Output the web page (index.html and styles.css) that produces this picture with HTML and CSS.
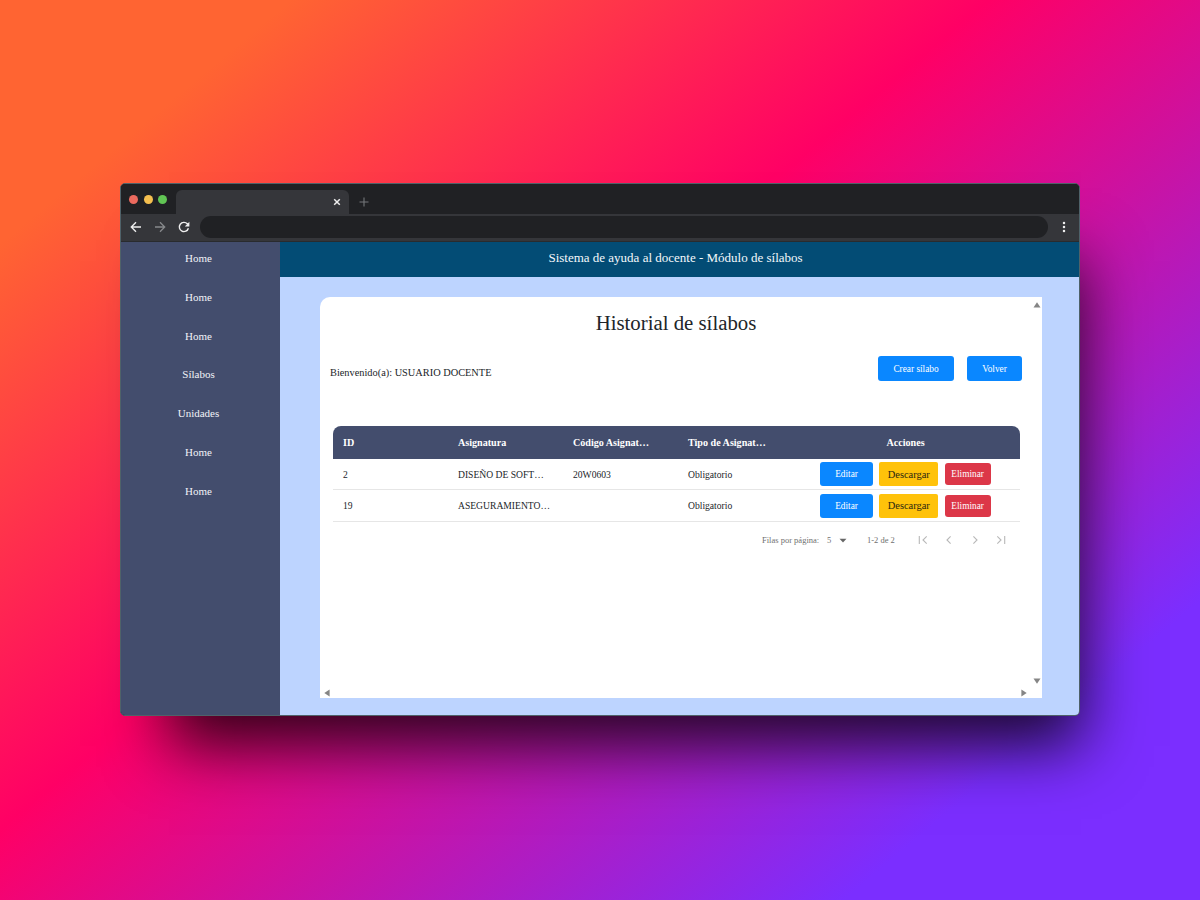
FILE: index.html
```html
<!DOCTYPE html>
<html lang="es">
<head>
<meta charset="utf-8">
<title>Historial de sílabos</title>
<link rel="stylesheet" href="styles.css">
</head>
<body>
<div class="window">
  <div class="tabs">
    <div class="lights"><i class="red"></i><i class="yellow"></i><i class="green"></i></div>
    <div class="tab"><svg width="8" height="8" viewBox="0 0 8 8"><path d="M1.2 1.2l5.6 5.6M6.8 1.2L1.2 6.8" stroke="#eee" stroke-width="1.5"/></svg></div>
    <svg class="plus" width="10" height="10" viewBox="0 0 10 10"><path d="M5 .5v9M.5 5h9" stroke="#74777a" stroke-width="1.1"/></svg>
  </div>
  <div class="toolbar">
    <svg class="nav" width="12" height="12" viewBox="0 0 12 12"><path d="M11 6H1.5M6 1.3L1.3 6 6 10.7" fill="none" stroke="#eee" stroke-width="1.4"/></svg>
    <svg class="nav" width="12" height="12" viewBox="0 0 12 12"><path d="M1 6h9.5M6 1.3L10.7 6 6 10.7" fill="none" stroke="#87898c" stroke-width="1.3"/></svg>
    <svg class="nav" width="12" height="12" viewBox="0 0 12 12"><path d="M10.4 7.2A4.6 4.6 0 1 1 9.3 2.8L10.4 4" fill="none" stroke="#eee" stroke-width="1.4"/><path d="M11.4.8v4.6H6.8z" fill="#eee"/></svg>
    <div class="address"></div>
    <svg class="dots" width="4" height="12" viewBox="0 0 4 12" fill="#eee"><circle cx="2" cy="2" r="1.25"/><circle cx="2" cy="6" r="1.25"/><circle cx="2" cy="10" r="1.25"/></svg>
  </div>
  <div class="app">
    <nav class="side"><a>Home</a><a>Home</a><a>Home</a><a>Sílabos</a><a>Unidades</a><a>Home</a><a>Home</a></nav>
    <main class="main">
      <header class="banner">Sistema de ayuda al docente - Módulo de sílabos</header>
      <section class="panel">
        <h1>Historial de sílabos</h1>
        <div class="welcome"><span>Bienvenido(a): USUARIO DOCENTE</span><div class="actions"><button class="btn create">Crear sílabo</button><button class="btn back">Volver</button></div></div>
        <div class="table">
          <div class="row head"><b>ID</b><b>Asignatura</b><b>Código Asignat…</b><b>Tipo de Asignat…</b><b class="center">Acciones</b></div>
          <div class="row"><span>2</span><span>DISEÑO DE SOFT…</span><span>20W0603</span><span>Obligatorio</span><div class="ops"><button class="btn edit">Editar</button><button class="btn download">Descargar</button><button class="btn delete">Eliminar</button></div></div>
          <div class="row last"><span>19</span><span>ASEGURAMIENTO…</span><span></span><span>Obligatorio</span><div class="ops"><button class="btn edit">Editar</button><button class="btn download">Descargar</button><button class="btn delete">Eliminar</button></div></div>
        </div>
        <div class="pager">
          <span class="label">Filas por página:</span><span class="size">5</span>
          <svg class="caret" width="8" height="5" viewBox="0 0 8 5"><path d="M.5.7h7L4 4.4z" fill="#666"/></svg>
          <span class="range">1-2 de 2</span>
          <svg class="step" width="10" height="10" viewBox="0 0 10 10"><path d="M1.3 1v8M8.7 1.4L5 5l3.7 3.6"/></svg>
          <svg class="step" width="10" height="10" viewBox="0 0 10 10"><path d="M6.6 1.4L3 5l3.6 3.6"/></svg>
          <svg class="step" width="10" height="10" viewBox="0 0 10 10"><path d="M3.4 1.4L7 5 3.4 8.6"/></svg>
          <svg class="step" width="10" height="10" viewBox="0 0 10 10"><path d="M8.7 1v8M1.3 1.4L5 5 1.3 8.6"/></svg>
        </div>
        <svg class="arrow up" width="8" height="6" viewBox="0 0 8 6"><path d="M4 .3L7.5 5.6H.5z"/></svg>
        <svg class="arrow down" width="8" height="6" viewBox="0 0 8 6"><path d="M4 5.7L.5.4h7z"/></svg>
        <svg class="arrow left" width="6" height="8" viewBox="0 0 6 8"><path d="M.3 4L5.6.5v7z"/></svg>
        <svg class="arrow right" width="6" height="8" viewBox="0 0 6 8"><path d="M5.7 4L.4.5v7z"/></svg>
      </section>
    </main>
  </div>
</div>
</body>
</html>
```
FILE: styles.css
```css
* { box-sizing: border-box; }
body {
  margin: 0; width: 1200px; height: 900px; overflow: hidden;
  display: flex; justify-content: center; align-items: flex-start; padding-top: 183px;
  background: linear-gradient(140deg, #ff6432 12.8%, #ff0065 43.52%, #7b2eff 84.34%);
  font-family: "Liberation Serif", serif; color: #212529;
}
.window {
  width: 960px; height: 533px; display: flex; flex-direction: column;
  border: 1px solid #4f6269; border-radius: 5px; overflow: hidden; background: #202124;
  box-shadow: 25px 54px 60px -24px rgba(0, 0, 0, .8);
}
.tabs { height: 30px; flex: none; display: flex; align-items: flex-end; background: #202124; }
.lights { display: flex; gap: 5.5px; padding: 0 9px 10px 8px; }
.lights i { width: 9px; height: 9px; border-radius: 50%; }
.red { background: #ec6a5e; }
.yellow { background: #f4bf4f; }
.green { background: #61c554; }
.tab { width: 173px; height: 24px; border-radius: 6px 6px 0 0; background: #35363a; display: flex; justify-content: flex-end; align-items: center; padding: 0 8px 1px 0; }
.plus { margin: 0 0 7px 10px; }
.toolbar { height: 28px; flex: none; background: #35363a; border-bottom: 1px solid #292b2e; display: flex; align-items: center; padding: 0 0 1px 9px; }
.nav { margin-right: 12px; }
.address { width: 848px; height: 22px; border-radius: 11px; background: #202124; margin-left: -2px; }
.dots { margin-left: 14px; }
.app { flex: 1; display: flex; min-height: 0; }
.side { width: 159px; flex: none; background: #434d6d; display: flex; flex-direction: column; align-items: center; padding: 6px 4px 0 0; }
.side a { height: 38.8px; line-height: 20px; font-size: 11px; color: #f1f3f8; }
.main { flex: 1; background: #bdd4ff; display: flex; flex-direction: column; }
.banner { height: 35px; background: #034c75; color: #f4f8fb; text-align: center; line-height: 31px; font-size: 13px; padding-right: 8px; }
.panel { position: relative; width: 722px; height: 401px; margin: 20px 0 0 40px; background: #fff; border-radius: 10px 0 0 0; padding-left: 10px; }
h1 { margin: 0; padding: 11px 20px 0 0; font-size: 20.8px; font-weight: 400; line-height: 30px; text-align: center; }
.welcome { display: flex; justify-content: space-between; height: 88px; padding: 18px 20px 0 0; font-size: 10.35px; }
.welcome > span { line-height: 33px; }
.actions { display: flex; gap: 13px; align-items: flex-start; }
.btn { border: 0; border-radius: 3px; padding: 0; font: 9.3px "Liberation Serif", serif; color: #fff; background: #0a87ff; height: 24px; text-align: center; }
.create { width: 76px; height: 25px; }
.back { width: 55px; height: 25px; }
.table { width: 687px; margin-left: 3px; }
.row { display: grid; grid-template-columns: 115px 115px 115px 115px 1fr; align-items: center; height: 31px; border-bottom: 1px solid #e6e6e6; padding-left: 10px; font-size: 9.6px; }
.row.head { height: 33px; border: 0; border-radius: 8px 8px 0 0; background: #434d6d; color: #fff; font-size: 10.1px; }
.row.last { height: 32px; }
.center { text-align: center; padding-right: 12px; }
.ops { display: flex; gap: 6.3px; align-items: center; padding-left: 17px; }
.edit { width: 53px; }
.download { width: 59px; background: #ffc20a; color: #292611; font-size: 10.4px; border-radius: 2px; }
.delete { width: 46px; height: 22px; background: #dc3748; }
.pager { display: flex; align-items: center; height: 36px; padding-left: 432px; font-size: 8.5px; color: #707070; }
.label { width: 65px; }
.size { width: 12px; }
.caret { margin-right: 20px; }
.range { width: 51px; }
.step { margin-right: 16px; fill: none; stroke: #b8b8b8; stroke-width: 1.1; }
.arrow { position: absolute; fill: #858585; }
.up { right: 1px; top: 5px; }
.down { right: 1px; bottom: 14px; }
.left { left: 4px; bottom: 1px; }
.right { right: 15px; bottom: 1px; }
```
